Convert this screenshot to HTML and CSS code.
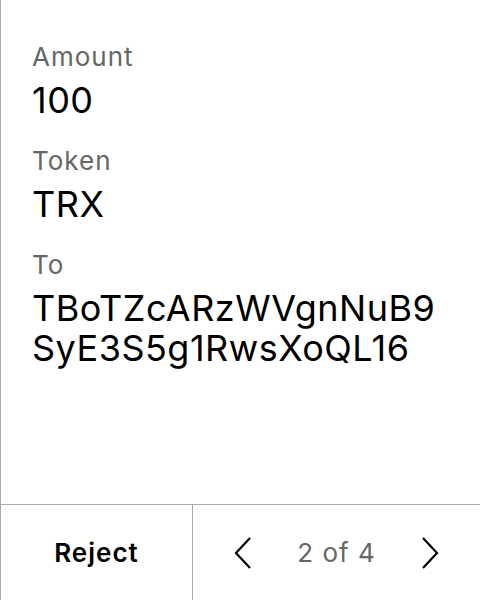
FILE: index.html
```html
<!DOCTYPE html>
<html>
<head>
<meta charset="utf-8">
<link rel="stylesheet" href="styles.css">
</head>
<body>
<div class="screen">
  <div class="content">
    <div class="field">
      <div class="label">Amount</div>
      <div class="value">100</div>
    </div>
    <div class="field">
      <div class="label">Token</div>
      <div class="value">TRX</div>
    </div>
    <div class="field">
      <div class="label">To</div>
      <div class="value address">TBoTZcARzWVgnNuB9<br>SyE3S5g1RwsXoQL16</div>
    </div>
  </div>
  <div class="footer">
    <div class="reject">Reject</div>
    <div class="pager">
      <svg class="chev" width="20" height="34" viewBox="0 0 20 34"><path d="M17 2 L3 17 L17 32" fill="none" stroke="#000" stroke-width="2.2"/></svg>
      <span class="count">2 of 4</span>
      <svg class="chev" width="20" height="34" viewBox="0 0 20 34"><path d="M3 2 L17 17 L3 32" fill="none" stroke="#000" stroke-width="2.2"/></svg>
    </div>
  </div>
</div>
</body>
</html>
```
FILE: styles.css
```css
html, body {
  margin: 0;
  padding: 0;
  background: #fff;
}
.screen {
  width: 480px;
  height: 600px;
  box-sizing: border-box;
  border-left: 1px solid #ababab;
  display: flex;
  flex-direction: column;
  font-family: Inter, "Noto Sans", sans-serif;
  color: #000;
}
.content {
  flex: 1;
  padding: 40px 0 0 31px;
  display: flex;
  flex-direction: column;
  gap: 24px;
}
.label {
  font-size: 26px;
  line-height: 34px;
  letter-spacing: 1px;
  color: #666;
}
.value {
  font-size: 36px;
  line-height: 40px;
  letter-spacing: 0.5px;
  margin-top: 6px;
}
.footer {
  height: 96px;
  border-top: 1px solid #ababab;
  display: flex;
  box-sizing: border-box;
}
.reject {
  width: 191px;
  border-right: 1px solid #ababab;
  display: flex;
  align-items: center;
  justify-content: center;
  font-size: 26px;
  font-weight: 600;
  letter-spacing: 1px;
}
.pager {
  flex: 1;
  display: flex;
  align-items: center;
  justify-content: center;
  gap: 44px;
}
.count {
  font-size: 26px;
  letter-spacing: 1px;
  color: #666;
}
.chev {
  display: block;
}
```
